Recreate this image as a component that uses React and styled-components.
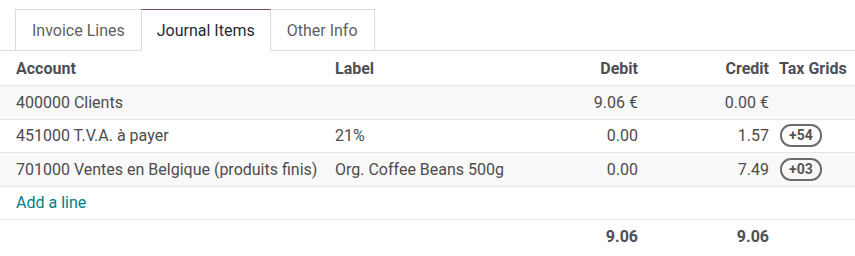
import React from "react";
import styled, { createGlobalStyle } from "styled-components";

const Global = createGlobalStyle`
  html, body { margin: 0; padding: 0; background: #fff; }
  body { font-family: Roboto, "Noto Sans", sans-serif; font-size: 16px; color: #4c4c4c; }
  * { box-sizing: border-box; }
`;

const Page = styled.div`
  width: 855px;
  padding-top: 9px;
`;

const Tabs = styled.div`
  display: flex;
  padding-left: 16px;
  border-bottom: 1px solid #d8dadd;
`;

const Tab = styled.div`
  height: 42px;
  margin-bottom: -1px;
  margin-left: -1px;
  padding: 1px ${(p) => p.$pad}px 0;
  display: flex;
  align-items: center;
  border: 1px solid #d8dadd;
  border-top-color: ${(p) => (p.$active ? "#714b67" : "#d8dadd")};
  border-bottom-color: ${(p) => (p.$active ? "#fff" : "#d8dadd")};
  background: #fff;
  color: ${(p) => (p.$active ? "#1f2937" : "#5f5f5f")};
  font-size: 16px;
  position: relative;
  z-index: ${(p) => (p.$active ? 1 : 0)};
`;

const Row = styled.div`
  display: grid;
  grid-template-columns: 327px 193px 126px 131px 78px;
  height: ${(p) => p.$h || 33.5}px;
  align-items: center;
  background: ${(p) => (p.$striped ? "#f9f9f9" : "#fff")};
  border-bottom: 1px solid ${(p) => (p.$noline ? "transparent" : "#e4e6ea")};
  font-weight: ${(p) => (p.$bold ? 700 : 400)};
  color: ${(p) => (p.$bold ? "#4d4f57" : "#4c4c4c")};
`;

const Cell = styled.div`
  padding: 0 ${(p) => (p.$right ? 8 : 0)}px 0 ${(p) => p.$pl ?? 8}px;
  text-align: ${(p) => (p.$right ? "right" : "left")};
  white-space: nowrap;
  overflow: hidden;
`;

const AddLink = styled.span`
  color: #017e84;
`;

const Badge = styled.span`
  display: inline-block;
  border: 2px solid #6c6c6c;
  border-radius: 11px;
  padding: 0 7px;
  line-height: 19px;
  font-size: 14px;
  font-weight: 700;
  color: #555;
  margin-left: 1px;
`;

const lines = [
  { account: "400000 Clients", label: "", debit: "9.06 €", credit: "0.00 €", tag: null },
  { account: "451000 T.V.A. à payer", label: "21%", debit: "0.00", credit: "1.57", tag: "+54" },
  { account: "701000 Ventes en Belgique (produits finis)", label: "Org. Coffee Beans 500g", debit: "0.00", credit: "7.49", tag: "+03" },
];

export default function App() {
  return (
    <Page>
      <Global />
      <Tabs>
        <Tab $pad={16}>Invoice Lines</Tab>
        <Tab $active $pad={15}>Journal Items</Tab>
        <Tab $pad={16}>Other Info</Tab>
      </Tabs>
      <Row $h={35} $bold>
        <Cell $pl={16}>Account</Cell>
        <Cell>Label</Cell>
        <Cell $right>Debit</Cell>
        <Cell $right>Credit</Cell>
        <Cell $pl={2}>Tax Grids</Cell>
      </Row>
      {lines.map((l, i) => (
        <Row key={i} $striped={i % 2 === 0}>
          <Cell $pl={16}>{l.account}</Cell>
          <Cell>{l.label}</Cell>
          <Cell $right>{l.debit}</Cell>
          <Cell $right>{l.credit}</Cell>
          <Cell $pl={2}>{l.tag && <Badge>{l.tag}</Badge>}</Cell>
        </Row>
      ))}
      <Row>
        <Cell $pl={16}>
          <AddLink>Add a line</AddLink>
        </Cell>
      </Row>
      <Row $bold $noline>
        <Cell $pl={16}></Cell>
        <Cell></Cell>
        <Cell $right>9.06</Cell>
        <Cell $right>9.06</Cell>
        <Cell></Cell>
      </Row>
    </Page>
  );
}
